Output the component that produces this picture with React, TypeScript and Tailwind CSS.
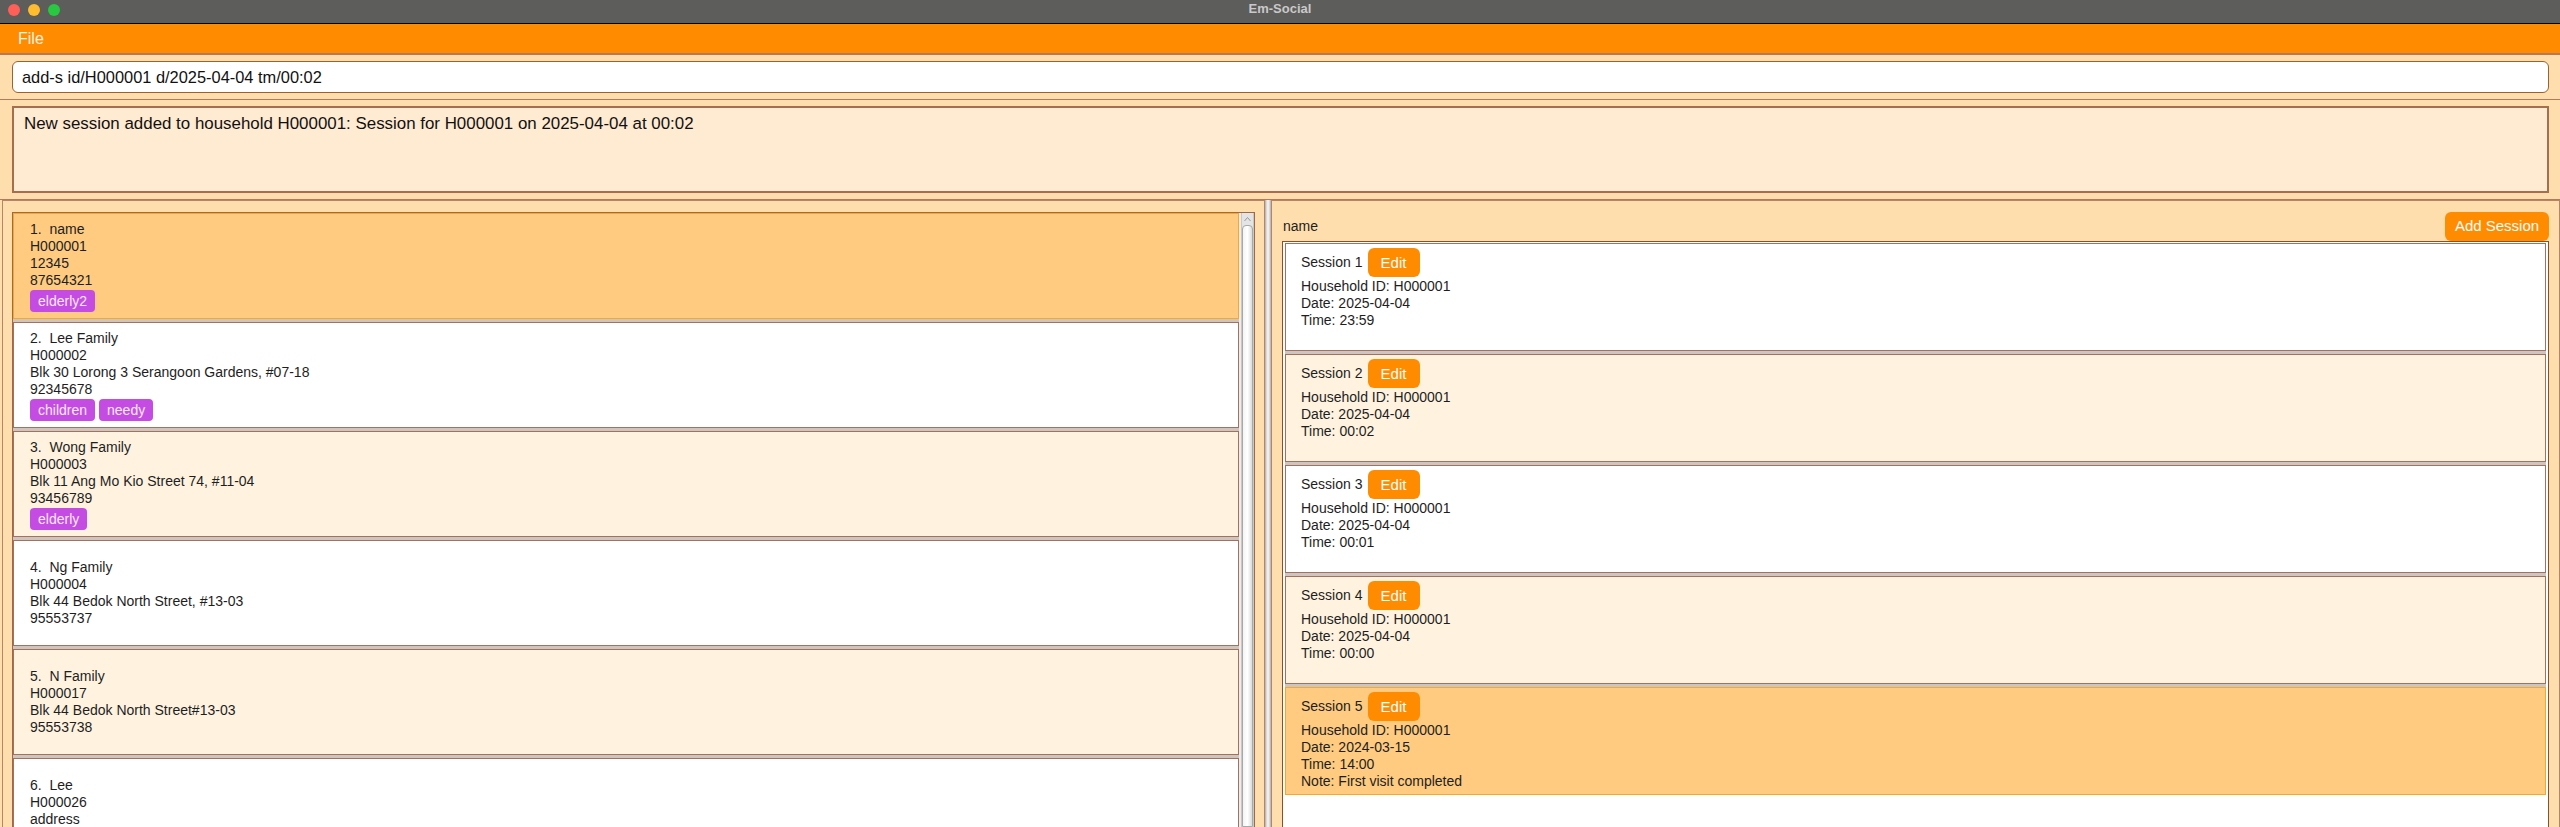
import React from 'react';

const HOUSEHOLDS = [
  { name: 'name', id: 'H000001', address: '12345', phone: '87654321', tags: ['elderly2'] },
  { name: 'Lee Family', id: 'H000002', address: 'Blk 30 Lorong 3 Serangoon Gardens, #07-18', phone: '92345678', tags: ['children', 'needy'] },
  { name: 'Wong Family', id: 'H000003', address: 'Blk 11 Ang Mo Kio Street 74, #11-04', phone: '93456789', tags: ['elderly'] },
  { name: 'Ng Family', id: 'H000004', address: 'Blk 44 Bedok North Street, #13-03', phone: '95553737', tags: [] },
  { name: 'N Family', id: 'H000017', address: 'Blk 44 Bedok North Street#13-03', phone: '95553738', tags: [] },
  { name: 'Lee', id: 'H000026', address: 'address', phone: '91234567', tags: [] },
];

const SESSIONS = [
  { date: '2025-04-04', time: '23:59' },
  { date: '2025-04-04', time: '00:02' },
  { date: '2025-04-04', time: '00:01' },
  { date: '2025-04-04', time: '00:00' },
  { date: '2024-03-15', time: '14:00', note: 'First visit completed' },
];

function HouseholdCard({ h, index }: { h: (typeof HOUSEHOLDS)[number]; index: number }) {
  const selected = index === 0;
  const bg = selected ? 'bg-[#ffcb80] border-[#f6a826]' : index % 2 === 1 ? 'bg-white border-[#a8705a]' : 'bg-[#fff3e0] border-[#a8705a]';
  return (
    <div className={`h-[106px] shrink-0 border flex flex-col justify-center pl-[16px] text-[14px] leading-[17px] text-[#1e1e1e] ${bg}`}>
      <div className="whitespace-pre">{`${index + 1}.  ${h.name}`}</div>
      <div>{h.id}</div>
      <div>{h.address}</div>
      <div>{h.phone}</div>
      {h.tags.length > 0 && (
        <div className="flex gap-[4px] mt-[1px]">
          {h.tags.map((t) => (
            <span key={t} className="h-[22px] px-[8px] rounded-[4px] bg-[#c44ce2] text-[#fbeaff] leading-[22px]">
              {t}
            </span>
          ))}
        </div>
      )}
    </div>
  );
}

function SessionCard({ s, index }: { s: (typeof SESSIONS)[number]; index: number }) {
  const selected = index === 4;
  const bg = selected ? 'bg-[#ffcb80] border-[#f6a826]' : index % 2 === 0 ? 'bg-white border-[#a8705a]' : 'bg-[#fff3e0] border-[#a8705a]';
  return (
    <div className={`min-h-[108px] border pt-[4px] pl-[15px] pb-[4px] text-[14px] leading-[17px] text-[#1e1e1e] ${bg}`}>
      <div className="flex items-center h-[29px] mb-[1px]">
        <span>Session {index + 1}</span>
        <button className="ml-[5px] w-[52px] h-[29px] rounded-[6px] bg-[#ff8c00] text-[15px] text-white">Edit</button>
      </div>
      <div>Household ID: H000001</div>
      <div>Date: {s.date}</div>
      <div>Time: {s.time}</div>
      {s.note && <div>Note: {s.note}</div>}
    </div>
  );
}

export default function App() {
  return (
    <div className="w-[2560px] h-[827px] overflow-hidden flex flex-col bg-[#ffdead] font-['Liberation_Sans',Arial,sans-serif]">
      {/* window title bar */}
      <div className="h-[24px] shrink-0 bg-[#5d5d5b] border-b border-black relative flex items-center">
        <div className="flex gap-[8px] pl-[8px] -mt-[4px]">
          <span className="w-[12px] h-[12px] rounded-full bg-[#fe5f57]" />
          <span className="w-[12px] h-[12px] rounded-full bg-[#febc2e]" />
          <span className="w-[12px] h-[12px] rounded-full bg-[#28c840]" />
        </div>
        <div className="absolute inset-x-0 top-0 h-[17px] flex items-center justify-center text-[13px] font-bold text-[#c9c9c9]">
          Em-Social
        </div>
      </div>

      {/* menu */}
      <div className="h-[31px] shrink-0 bg-[#ff8c00] border-b-2 border-[#b7785a] flex items-center pl-[18px]">
        <span className="text-[16px] text-[#fff4e4]">File</span>
      </div>

      {/* command box */}
      <div className="shrink-0 pt-[6px] pb-[6px] pl-[12px] pr-[11px] border-b border-[#b7785a]">
        <div className="h-[32px] bg-white border border-[#a0602e] rounded-[6px] flex items-center pl-[9px] text-[16.4px] text-[#111]">
          add-s id/H000001 d/2025-04-04 tm/00:02
        </div>
      </div>

      {/* result display */}
      <div className="shrink-0 pt-[6px] pb-[6px] pl-[12px] pr-[11px] border-b border-[#b7785a]">
        <div className="h-[87px] bg-[#ffead2] border-2 border-[#a66e4e] pt-[6px] pl-[10px] text-[16.9px] leading-[20px] text-[#111]">
          New session added to household H000001: Session for H000001 on 2025-04-04 at 00:02
        </div>
      </div>

      {/* main split */}
      <div className="flex-1 min-h-0 flex pl-[2px]">
        {/* household list panel */}
        <div className="w-[1263px] shrink-0 border border-b-0 border-[#b7846a] pt-[11px] px-[9px] flex flex-col min-h-0">
          <div className="flex-1 min-h-0 border border-b-0 border-[#a0684a] flex overflow-hidden">
            <div className="w-[1226px] shrink-0 flex flex-col gap-[3px] bg-[#cdc6c0]">
              {HOUSEHOLDS.map((h, i) => (
                <HouseholdCard key={h.id} h={h} index={i} />
              ))}
            </div>
            <div className="w-[2px] bg-[#ececec]" />
            {/* scrollbar */}
            <div className="w-[13px] shrink-0 bg-[#e4e4e4] border-x border-[#c8c8c8] flex flex-col items-center">
              <svg width="9" height="11" viewBox="0 0 9 11" className="shrink-0 mt-[1px]">
                <path d="M1.5 7 L4.5 3.5 L7.5 7" fill="none" stroke="#9a9a9a" strokeWidth="1" />
              </svg>
              <div className="w-[11px] flex-1 rounded-t-[4px] border border-[#a8a8a8] bg-gradient-to-r from-[#f4f4f4] via-[#ffffff] to-[#dcdcdc]" />
            </div>
          </div>
        </div>

        {/* divider */}
        <div className="w-[6px] shrink-0 bg-[#dadada] border-x border-[#bcbcbc] flex justify-center">
          <div className="w-[2px] bg-[#eeeeee]" />
        </div>

        {/* sessions panel */}
        <div className="flex-1 min-w-0 border border-b-0 border-[#b7846a] pt-[10px] pl-[10px] pr-[10px] flex flex-col min-h-0">
          <div className="h-[30px] shrink-0 flex items-center justify-between">
            <span className="pl-[1px] text-[14px] text-[#1e1e1e]">name</span>
            <button className="w-[104px] h-[29px] rounded-[6px] bg-[#ff8c00] text-[15px] text-white">Add Session</button>
          </div>
          <div className="flex-1 min-h-0 border border-b-0 border-[#8d4e28] bg-white pt-[1px] px-[2px] overflow-hidden">
            <div className="flex flex-col">
              {SESSIONS.map((s, i) => (
                <div key={i} className={i < SESSIONS.length - 1 ? 'pb-[3px] bg-[#cbc5c4]' : ''}>
                  <SessionCard s={s} index={i} />
                </div>
              ))}
            </div>
          </div>
        </div>
      </div>
    </div>
  );
}
